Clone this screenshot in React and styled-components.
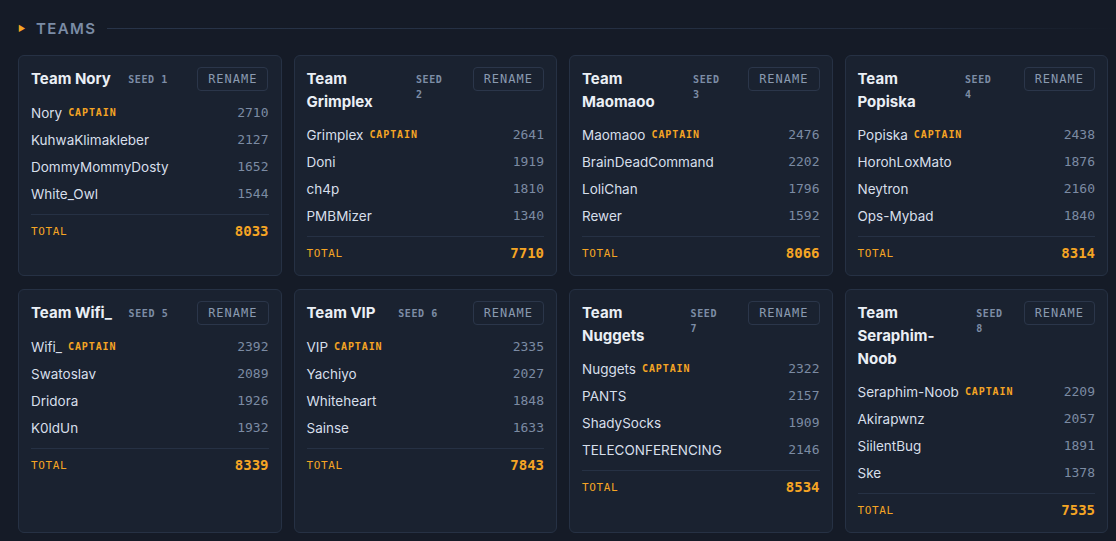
import React from 'react'
import styled, { createGlobalStyle } from 'styled-components'

const teams = [
  { name: 'Nory', seed: 1, total: 8033, players: [['Nory', 2710], ['KuhwaKlimakleber', 2127], ['DommyMommyDosty', 1652], ['White_Owl', 1544]] },
  { name: 'Grimplex', seed: 2, total: 7710, players: [['Grimplex', 2641], ['Doni', 1919], ['ch4p', 1810], ['PMBMizer', 1340]] },
  { name: 'Maomaoo', seed: 3, total: 8066, players: [['Maomaoo', 2476], ['BrainDeadCommand', 2202], ['LoliChan', 1796], ['Rewer', 1592]] },
  { name: 'Popiska', seed: 4, total: 8314, players: [['Popiska', 2438], ['HorohLoxMato', 1876], ['Neytron', 2160], ['Ops-Mybad', 1840]] },
  { name: 'Wifi_', seed: 5, total: 8339, players: [['Wifi_', 2392], ['Swatoslav', 2089], ['Dridora', 1926], ['K0ldUn', 1932]] },
  { name: 'VIP', seed: 6, total: 7843, players: [['VIP', 2335], ['Yachiyo', 2027], ['Whiteheart', 1848], ['Sainse', 1633]] },
  { name: 'Nuggets', seed: 7, total: 8534, players: [['Nuggets', 2322], ['PANTS', 2157], ['ShadySocks', 1909], ['TELECONFERENCING', 2146]] },
  { name: 'Seraphim-Noob', seed: 8, total: 7535, players: [['Seraphim-Noob', 2209], ['Akirapwnz', 2057], ['SiilentBug', 1891], ['Ske', 1378]] },
]

function App() {
  return (
    <>
      <Global />
      <Page>
        <Section>
          <Arrow>▶</Arrow>
          <SectionTitle>TEAMS</SectionTitle>
          <SectionLine />
        </Section>
        <Grid>
          {teams.map(t => (
            <Card key={t.seed}>
              <Head>
                <Title>Team {t.name}</Title>
                <Seed>SEED {t.seed}</Seed>
                <Rename>RENAME</Rename>
              </Head>
              <List>
                {t.players.map(([p, r], i) => (
                  <Row key={p}>
                    <Name>
                      {p}
                      {i === 0 && <Captain>CAPTAIN</Captain>}
                    </Name>
                    <Rating>{r}</Rating>
                  </Row>
                ))}
              </List>
              <Total>
                <TotalLabel>TOTAL</TotalLabel>
                <TotalValue>{t.total}</TotalValue>
              </Total>
            </Card>
          ))}
        </Grid>
      </Page>
    </>
  )
}

export default App

const Global = createGlobalStyle`
body{
  margin:0;
  background:#151b27;
  font-family:Inter, "Noto Sans", sans-serif;
}
`

const Page = styled.div`
padding:16px 8px 8px 18px;
`

const Section = styled.div`
display:flex;
align-items:center;
height:24px;
margin-bottom:15px;
margin-right:-8px;
`

const Arrow = styled.span`
color:#f5a524;
font-size:8px;
width:8px;
margin-right:10px;
`

const SectionTitle = styled.span`
color:#7b8ca6;
font-size:15px;
font-weight:600;
letter-spacing:1.4px;
margin-right:10px;
`

const SectionLine = styled.div`
flex:1;
height:1px;
background:linear-gradient(to right, #283449 0%, #222c3e 80%, rgba(34,44,62,0) 100%);
`

const Grid = styled.div`
display:grid;
grid-template-columns:repeat(4, 1fr);
gap:13px 12px;
`

const Card = styled.div`
background:#1a2230;
border:1px solid #263144;
border-radius:6px;
padding:11px 12px 12px;
display:flex;
flex-direction:column;
`

const Head = styled.div`
display:flex;
justify-content:space-between;
align-items:flex-start;
gap:8px;
margin-bottom:8px;
`

const Title = styled.div`
color:#eaeff5;
font-size:15px;
font-weight:700;
line-height:23px;
`

const Seed = styled.div`
margin-top:5px;
margin-right:12px;
color:#7d8da6;
font-family:"DejaVu Sans Mono", monospace;
font-size:10px;
font-weight:600;
letter-spacing:0.6px;
line-height:15px;
`

const Rename = styled.button`
flex-shrink:0;
height:24px;
padding:0 10px;
background:transparent;
border:1px solid #2b364a;
border-radius:4px;
color:#8a9ab0;
font-family:"DejaVu Sans Mono", monospace;
font-size:12px;
font-weight:500;
letter-spacing:1px;
`

const List = styled.div`
display:flex;
flex-direction:column;
padding-bottom:7px;
`

const Row = styled.div`
display:flex;
justify-content:space-between;
align-items:center;
height:27px;
`

const Name = styled.span`
color:#d7dfea;
font-size:13.5px;
display:flex;
align-items:center;
`

const Captain = styled.span`
margin-left:6px;
color:#f5a524;
font-family:"DejaVu Sans Mono", monospace;
font-size:10px;
font-weight:700;
letter-spacing:0.9px;
`

const Rating = styled.span`
color:#7c8ba3;
font-family:"DejaVu Sans Mono", monospace;
font-size:13px;
`

const Total = styled.div`
display:flex;
justify-content:space-between;
align-items:center;
border-top:1px solid #263144;
padding-top:6px;
height:20px;
box-sizing:content-box;
`

const TotalLabel = styled.span`
color:#f5a524;
font-family:"DejaVu Sans Mono", monospace;
font-size:11px;
font-weight:500;
letter-spacing:0.6px;
`

const TotalValue = styled.span`
color:#f5a524;
font-family:"DejaVu Sans Mono", monospace;
font-size:14px;
font-weight:700;
`
